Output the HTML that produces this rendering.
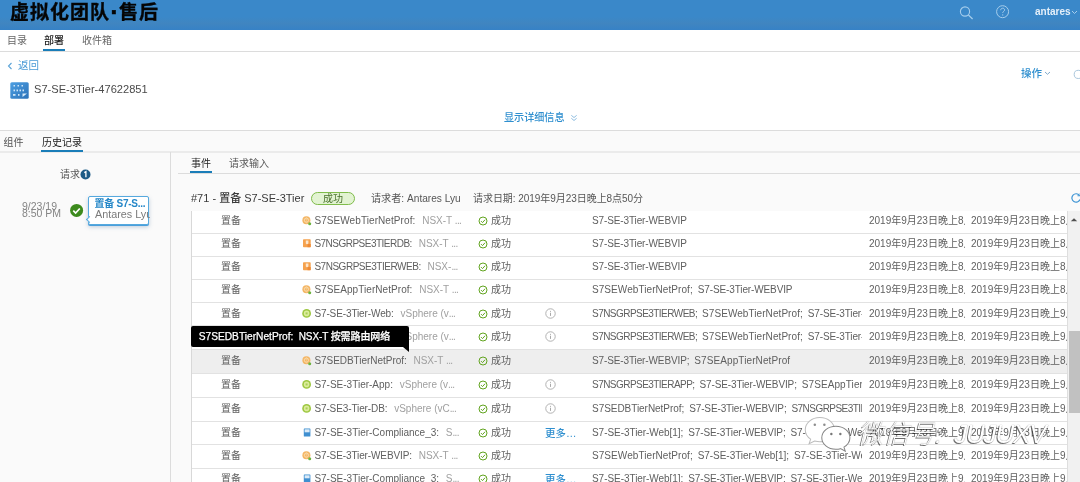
<!DOCTYPE html>
<html lang="zh-CN">
<head>
<meta charset="utf-8">
<title>虚拟化团队·售后</title>
<style>
*{box-sizing:border-box;margin:0;padding:0}
html,body{width:1080px;height:482px;overflow:hidden;background:#fff}
body{position:relative;will-change:transform;font-family:"Liberation Sans","Noto Sans CJK SC",sans-serif;font-size:10px;color:#565656}
.abs{position:absolute;white-space:nowrap}
.hdr{left:0;top:0;width:1080px;height:30px;background:linear-gradient(#3a88c9 0,#3a88c9 55%,#4085c0 78%,#3682c6 100%)}
.title{left:10px;top:0;height:29px;line-height:26px;font-size:19px;letter-spacing:1px;font-weight:700;color:#050505;-webkit-text-stroke:.35px #050505}
.title b{display:inline-block;width:9px;text-align:center;font-weight:900;letter-spacing:0;font-size:26px;line-height:20px;vertical-align:-1.5px}
.blue{color:#2f8fcf}
.nav{top:34px;font-size:10px;line-height:14px;color:#666}
.line{background:#dcdcdc;height:1px}
.t{font-size:10px;line-height:14px}
.tbl{left:191px;top:211px;width:876px;height:271px;background:#fff;border-left:1px solid #d8d8d8}
.r{left:192px;width:875px;height:20px}
.r.hl{}
.r span{position:absolute;top:0;line-height:20px;font-size:10px;white-space:nowrap;color:#606060;overflow:hidden}
.r i{font-style:normal;color:#a0a0a0;margin-left:4px}
.c1{left:29px}
.c2{left:122.4px;width:152px}
.r u{text-decoration:none;letter-spacing:-.7px}
.r em{font-style:normal}
.c3{left:299px}
.c4{left:353px;color:#2f8fcf !important;font-size:10.5px !important;font-weight:500}
.c5{left:400px;width:270px;word-spacing:2.1px}
.c6{left:677px;width:96px}
.c7{left:779px;width:96px}
.ic{position:absolute;left:110px;top:4px;width:10px;height:11px}
.ok{position:absolute;left:286px;top:5px;width:10px;height:10px}
.inf{position:absolute;left:353px;top:4px;width:11px;height:11px}
.rl{left:192px;width:875px;height:1px;background:#e2e2e2}
</style>
</head>
<body>
<div class="abs hdr"></div>
<div class="abs title">虚拟化团队<b>·</b>售后</div>
<svg class="abs" style="left:957px;top:4px" width="20" height="20" viewBox="0 0 20 20"><circle cx="8" cy="7.5" r="4.6" fill="none" stroke="#a5cdec" stroke-width="1.1"/><path d="M11.4 11l4.200 4" stroke="#a5cdec" stroke-width="1.2" fill="none"/></svg>
<svg class="abs" style="left:994px;top:3px" width="18" height="18" viewBox="0 0 18 18"><circle cx="8.6" cy="8.7" r="6" fill="none" stroke="#a5cdec" stroke-width="1"/><path d="M6.7 7.2c0-1.300.9-2 2-2s1.900.7 1.900 1.800c0 1.300-1.900 1.400-1.900 2.900" fill="none" stroke="#a5cdec" stroke-width="1"/><circle cx="8.7" cy="11.9" r=".7" fill="#a5cdec"/></svg>
<div class="abs" style="left:1035px;top:4.8px;font-size:10px;font-weight:700;color:#e4eff9;line-height:14px">antares</div>
<svg class="abs" style="left:1071px;top:10px" width="7" height="5" viewBox="0 0 7 5"><path d="M1 1l2.500 2.500L6 1" fill="none" stroke="#a5cdec" stroke-width="1"/></svg>

<div class="abs nav" style="left:7px">目录</div>
<div class="abs nav" style="left:44px;color:#222;font-weight:500">部署</div>
<div class="abs nav" style="left:82px">收件箱</div>
<div class="abs line" style="left:0;top:51px;width:1080px"></div>
<div class="abs" style="left:43px;top:49px;width:22px;height:2.4px;background:#1a7db8"></div>

<svg class="abs" style="left:7px;top:62px" width="6" height="8" viewBox="0 0 6 8"><path d="M4.500 1L1.500 4l3 3" fill="none" stroke="#5aa3d8" stroke-width="1.1"/></svg>
<div class="abs t" style="left:18px;top:58px;font-size:10.5px;color:#4a9bd6">返回</div>
<svg class="abs" style="left:10px;top:82px" width="19" height="17" viewBox="0 0 19 17"><defs><linearGradient id="g1" x1="0" y1="0" x2="1" y2="1"><stop offset="0" stop-color="#4d9fe2"/><stop offset="1" stop-color="#2d72b8"/></linearGradient></defs><rect x=".3" y=".3" width="18.4" height="16.4" rx="1.5" fill="url(#g1)"/><g fill="#cfe5f7"><rect x="3.500" y="3" width="1.500" height="1.500"/><rect x="7.500" y="3" width="1.500" height="1.500"/><rect x="11.500" y="3" width="1.500" height="1.500"/><rect x="3.500" y="7.500" width="1.500" height="1.800"/><rect x="6.500" y="7.500" width="1.500" height="1.800"/><rect x="9.500" y="7.500" width="1.500" height="1.800"/><rect x="12.500" y="7.500" width="1.500" height="1.800"/><rect x="3" y="12" width="2.500" height="1.800"/><rect x="8" y="12" width="1.500" height="1.800"/></g><path d="M12.500 11.500h4.500l-4.500 3.500z" fill="#d6e9f8"/></svg>
<div class="abs" style="left:34px;top:82px;font-size:11.1px;line-height:14px;color:#4a4a4a">S7-SE-3Tier-47622851</div>
<div class="abs t blue" style="left:1021px;top:66px;font-size:10.5px;font-weight:500">操作</div>
<svg class="abs" style="left:1044px;top:71px" width="7" height="5" viewBox="0 0 7 5"><path d="M1 1l2.500 2.300L6 1" fill="none" stroke="#7fa9cb" stroke-width="1"/></svg>
<svg class="abs" style="left:1072px;top:68px" width="12" height="12" viewBox="0 0 12 12"><circle cx="6.300" cy="6.400" r="4.100" fill="none" stroke="#a9c6dc" stroke-width="1"/></svg>
<div class="abs t blue" style="left:504px;top:111px;font-size:10.1px;font-weight:500">显示详细信息</div>
<svg class="abs" style="left:570px;top:113.5px" width="8" height="8" viewBox="0 0 9 9"><path d="M1.500 1.500L4.500 4l3-2.500M1.500 4.800L4.500 7.300l3-2.500" fill="none" stroke="#7fb4dc" stroke-width="1"/></svg>

<div class="abs" style="left:0;top:130px;width:1080px;height:352px;background:#fafafa"></div>
<div class="abs line" style="left:0;top:130px;width:1080px"></div>
<div class="abs t" style="left:3.5px;top:135.5px">组件</div>
<div class="abs t" style="left:42px;top:135.5px;color:#222">历史记录</div>
<div class="abs line" style="left:0;top:151px;width:1080px;height:2px;background:#ebebeb"></div>
<div class="abs" style="left:41px;top:150px;width:42px;height:2px;background:#1a7db8"></div>
<div class="abs" style="left:170px;top:152px;width:1px;height:330px;background:#dcdcdc"></div>

<div class="abs t" style="left:60px;top:168px">请求</div>
<svg class="abs" style="left:80px;top:169px" width="11" height="11" viewBox="0 0 11 11"><circle cx="5.500" cy="5.500" r="5" fill="#1d5b86"/><path d="M4.300 3.600l1.600-.9v5.600" fill="none" stroke="#fff" stroke-width="1.300"/></svg>
<div class="abs" style="left:22px;top:202.500px;font-size:10.5px;line-height:7.3px;color:#858585;text-align:left">9/23/19<br>8:50 PM</div>
<svg class="abs" style="left:69px;top:203px" width="15" height="15" viewBox="0 0 15 15"><circle cx="7.600" cy="7.400" r="6.500" fill="#3c8a1d"/><path d="M4.300 7.700l2.300 2.300 4.200-4.500" fill="none" stroke="#fff" stroke-width="1.700"/></svg>
<div class="abs" style="left:88px;top:196px;width:61px;height:29px;background:#fff;border:1px solid #56a9de;border-radius:2px;box-shadow:0 1px 0 #4a9fdb,0 2px 4px rgba(80,120,160,.35)"></div>
<div class="abs" style="left:86.500px;top:216.500px;width:5px;height:5px;background:#fff;border-left:1px solid #56a9de;border-bottom:1px solid #56a9de;transform:rotate(45deg)"></div>
<div class="abs" style="left:94.500px;top:198px;font-size:10px;letter-spacing:-.25px;font-weight:700;line-height:12px;color:#2587c8">置备 S7-S...</div>
<div class="abs" style="left:95px;top:208px;width:54.5px;overflow:hidden;font-size:10.8px;line-height:13px;color:#7a7a7a">Antares Lyu</div>

<div class="abs t" style="left:191px;top:157px;color:#222">事件</div>
<div class="abs t" style="left:229px;top:157px">请求输入</div>
<div class="abs" style="left:190px;top:171px;width:22px;height:2px;background:#1a7db8"></div>
<div class="abs line" style="left:178px;top:172.5px;width:902px"></div>

<div class="abs" style="left:191px;top:190.500px;font-size:11px;line-height:15px;color:#3a3a3a">#71 - <span style="font-weight:500">置备</span> S7-SE-3Tier</div>
<div class="abs" style="left:311px;top:192px;width:44px;height:13px;border:1px solid #7fbc4a;border-radius:7px;background:#e2f3d2;font-size:10px;line-height:11.5px;text-align:center;color:#48702a">成功</div>
<div class="abs t" style="left:371px;top:191.500px;font-size:10.15px">请求者: Antares Lyu</div>
<div class="abs t" style="left:473px;top:191.500px;font-size:10px;letter-spacing:-.05px">请求日期: 2019年9月23日晚上8点50分</div>
<svg class="abs" style="left:1070px;top:192px" width="12" height="12" viewBox="0 0 12 12"><path d="M9.500 3.500A4.200 4.200 0 1 0 10 7.500" fill="none" stroke="#3f95d4" stroke-width="1.200"/><path d="M7.500 3.800h2.800V1" fill="none" stroke="#3f95d4" stroke-width="1.100"/></svg>

<div class="abs tbl"></div>
<div class="abs" style="left:192px;top:349px;width:875px;height:24px;background:#eeeeee"></div>
<div class="abs rl" style="top:233px"></div>
<div class="abs rl" style="top:256px"></div>
<div class="abs rl" style="top:279px"></div>
<div class="abs rl" style="top:302px"></div>
<div class="abs rl" style="top:325px"></div>
<div class="abs rl" style="top:349px"></div>
<div class="abs rl" style="top:373px"></div>
<div class="abs rl" style="top:397px"></div>
<div class="abs rl" style="top:421px"></div>
<div class="abs rl" style="top:444px"></div>
<div class="abs rl" style="top:468px"></div>
<div class="abs r" style="top:211px"><span class="c1">置备</span><svg class="ic" viewBox="0 0 10 11"><circle cx="4.4" cy="5.2" r="4" fill="#f4b563"/><circle cx="4.4" cy="5.2" r="2.1" fill="none" stroke="#fbe0b4" stroke-width=".9"/><path d="M1.500 4.200h5.800M4.400 1.800v6.800" stroke="#f7cf97" stroke-width=".6"/><circle cx="7.700" cy="8.700" r="1.500" fill="#6db33f"/></svg><span class="c2"><em style="letter-spacing:0.08px">S7SEWebTierNetProf:</em><i> NSX-T <u>...</u></i></span><svg class="ok" viewBox="0 0 10 10"><circle cx="5" cy="5" r="4" fill="none" stroke="#62a420" stroke-width="1"/><path d="M3 5.1l1.5 1.5L7.1 3.7" fill="none" stroke="#62a420" stroke-width="1"/></svg><span class="c3">成功</span><span class="c5"><em style="letter-spacing:-0.12px">S7-SE-3Tier-WEBVIP</em></span><span class="c6">2019年9月23日晚上8点50分</span><span class="c7">2019年9月23日晚上8点02分</span></div>
<div class="abs r" style="top:234px"><span class="c1">置备</span><svg class="ic" viewBox="0 0 10 11"><rect x="1" y="1.200" width="7.700" height="8" rx=".8" fill="#f5a24e"/><path d="M3.800 2.600h2.600v2.800l-1.300 1.200-1.300-1.200z" fill="#fde6cc"/><path d="M5.500 6h3.200v3.200H5.500z" fill="#ee8a35"/></svg><span class="c2"><em style="letter-spacing:-0.51px">S7NSGRPSE3TIERDB:</em><i> NSX-T <u>...</u></i></span><svg class="ok" viewBox="0 0 10 10"><circle cx="5" cy="5" r="4" fill="none" stroke="#62a420" stroke-width="1"/><path d="M3 5.1l1.5 1.5L7.1 3.7" fill="none" stroke="#62a420" stroke-width="1"/></svg><span class="c3">成功</span><span class="c5"><em style="letter-spacing:-0.12px">S7-SE-3Tier-WEBVIP</em></span><span class="c6">2019年9月23日晚上8点50分</span><span class="c7">2019年9月23日晚上8点02分</span></div>
<div class="abs r" style="top:257px"><span class="c1">置备</span><svg class="ic" viewBox="0 0 10 11"><rect x="1" y="1.200" width="7.700" height="8" rx=".8" fill="#f5a24e"/><path d="M3.800 2.600h2.600v2.800l-1.300 1.200-1.300-1.200z" fill="#fde6cc"/><path d="M5.500 6h3.200v3.200H5.500z" fill="#ee8a35"/></svg><span class="c2"><em style="letter-spacing:-0.475px">S7NSGRPSE3TIERWEB:</em><i> NSX-<u>...</u></i></span><svg class="ok" viewBox="0 0 10 10"><circle cx="5" cy="5" r="4" fill="none" stroke="#62a420" stroke-width="1"/><path d="M3 5.1l1.5 1.5L7.1 3.7" fill="none" stroke="#62a420" stroke-width="1"/></svg><span class="c3">成功</span><span class="c5"><em style="letter-spacing:-0.12px">S7-SE-3Tier-WEBVIP</em></span><span class="c6">2019年9月23日晚上8点50分</span><span class="c7">2019年9月23日晚上8点02分</span></div>
<div class="abs r" style="top:280px"><span class="c1">置备</span><svg class="ic" viewBox="0 0 10 11"><circle cx="4.4" cy="5.2" r="4" fill="#f4b563"/><circle cx="4.4" cy="5.2" r="2.1" fill="none" stroke="#fbe0b4" stroke-width=".9"/><path d="M1.500 4.200h5.800M4.400 1.800v6.800" stroke="#f7cf97" stroke-width=".6"/><circle cx="7.700" cy="8.700" r="1.500" fill="#6db33f"/></svg><span class="c2"><em style="letter-spacing:0.06px">S7SEAppTierNetProf:</em><i> NSX-T <u>...</u></i></span><svg class="ok" viewBox="0 0 10 10"><circle cx="5" cy="5" r="4" fill="none" stroke="#62a420" stroke-width="1"/><path d="M3 5.1l1.5 1.5L7.1 3.7" fill="none" stroke="#62a420" stroke-width="1"/></svg><span class="c3">成功</span><span class="c5"><em style="letter-spacing:0.07px">S7SEWebTierNetProf;</em> <em style="letter-spacing:-0.12px">S7-SE-3Tier-WEBVIP</em></span><span class="c6">2019年9月23日晚上8点50分</span><span class="c7">2019年9月23日晚上8点02分</span></div>
<div class="abs r" style="top:304px"><span class="c1">置备</span><svg class="ic" viewBox="0 0 10 11"><circle cx="4.600" cy="5.400" r="4.400" fill="#9dc741"/><circle cx="4.600" cy="5.400" r="2.800" fill="#dcec9c"/><rect x="3.600" y="4.400" width="2" height="2" fill="#a9cf55"/></svg><span class="c2"><em style="letter-spacing:-0.115px">S7-SE-3Tier-Web:</em><i> vSphere (v<u>...</u></i></span><svg class="ok" viewBox="0 0 10 10"><circle cx="5" cy="5" r="4" fill="none" stroke="#62a420" stroke-width="1"/><path d="M3 5.1l1.5 1.5L7.1 3.7" fill="none" stroke="#62a420" stroke-width="1"/></svg><span class="c3">成功</span><svg class="inf" viewBox="0 0 10 10"><circle cx="5" cy="5" r="4.3" fill="none" stroke="#a8a8a8" stroke-width=".8"/><path d="M5 4.3v2.9M5 2.6v.9" stroke="#a8a8a8" stroke-width=".9" fill="none"/></svg><span class="c5"><em style="letter-spacing:-0.54px">S7NSGRPSE3TIERWEB;</em> <em style="letter-spacing:0.07px">S7SEWebTierNetProf;</em> <em style="letter-spacing:-0.12px">S7-SE-3Tier-WEBVIP</em></span><span class="c6">2019年9月23日晚上8点50分</span><span class="c7">2019年9月23日晚上9点02分</span></div>
<div class="abs r" style="top:327px"><span class="c1">置备</span><svg class="ic" viewBox="0 0 10 11"><circle cx="4.600" cy="5.400" r="4.400" fill="#9dc741"/><circle cx="4.600" cy="5.400" r="2.800" fill="#dcec9c"/><rect x="3.600" y="4.400" width="2" height="2" fill="#a9cf55"/></svg><span class="c2"><em style="letter-spacing:-0.115px">S7-SE-3Tier-Web:</em><i> vSphere (v<u>...</u></i></span><svg class="ok" viewBox="0 0 10 10"><circle cx="5" cy="5" r="4" fill="none" stroke="#62a420" stroke-width="1"/><path d="M3 5.1l1.5 1.5L7.1 3.7" fill="none" stroke="#62a420" stroke-width="1"/></svg><span class="c3">成功</span><svg class="inf" viewBox="0 0 10 10"><circle cx="5" cy="5" r="4.3" fill="none" stroke="#a8a8a8" stroke-width=".8"/><path d="M5 4.3v2.9M5 2.6v.9" stroke="#a8a8a8" stroke-width=".9" fill="none"/></svg><span class="c5"><em style="letter-spacing:-0.54px">S7NSGRPSE3TIERWEB;</em> <em style="letter-spacing:0.07px">S7SEWebTierNetProf;</em> <em style="letter-spacing:-0.12px">S7-SE-3Tier-WEBVIP</em></span><span class="c6">2019年9月23日晚上8点50分</span><span class="c7">2019年9月23日晚上9点02分</span></div>
<div class="abs r hl" style="top:351px"><span class="c1">置备</span><svg class="ic" viewBox="0 0 10 11"><circle cx="4.4" cy="5.2" r="4" fill="#f4b563"/><circle cx="4.4" cy="5.2" r="2.1" fill="none" stroke="#fbe0b4" stroke-width=".9"/><path d="M1.500 4.200h5.800M4.400 1.800v6.800" stroke="#f7cf97" stroke-width=".6"/><circle cx="7.700" cy="8.700" r="1.500" fill="#6db33f"/></svg><span class="c2"><em style="letter-spacing:-0.04px">S7SEDBTierNetProf:</em><i> NSX-T <u>...</u></i></span><svg class="ok" viewBox="0 0 10 10"><circle cx="5" cy="5" r="4" fill="none" stroke="#62a420" stroke-width="1"/><path d="M3 5.1l1.5 1.5L7.1 3.7" fill="none" stroke="#62a420" stroke-width="1"/></svg><span class="c3">成功</span><span class="c5"><em style="letter-spacing:-0.12px">S7-SE-3Tier-WEBVIP;</em> <em style="letter-spacing:0.1px">S7SEAppTierNetProf</em></span><span class="c6">2019年9月23日晚上8点50分</span><span class="c7">2019年9月23日晚上8点02分</span></div>
<div class="abs r" style="top:375px"><span class="c1">置备</span><svg class="ic" viewBox="0 0 10 11"><circle cx="4.600" cy="5.400" r="4.400" fill="#9dc741"/><circle cx="4.600" cy="5.400" r="2.800" fill="#dcec9c"/><rect x="3.600" y="4.400" width="2" height="2" fill="#a9cf55"/></svg><span class="c2"><em style="letter-spacing:0px">S7-SE-3Tier-App:</em><i> vSphere (v<u>...</u></i></span><svg class="ok" viewBox="0 0 10 10"><circle cx="5" cy="5" r="4" fill="none" stroke="#62a420" stroke-width="1"/><path d="M3 5.1l1.5 1.5L7.1 3.7" fill="none" stroke="#62a420" stroke-width="1"/></svg><span class="c3">成功</span><svg class="inf" viewBox="0 0 10 10"><circle cx="5" cy="5" r="4.3" fill="none" stroke="#a8a8a8" stroke-width=".8"/><path d="M5 4.3v2.9M5 2.6v.9" stroke="#a8a8a8" stroke-width=".9" fill="none"/></svg><span class="c5"><em style="letter-spacing:-0.54px">S7NSGRPSE3TIERAPP;</em> <em style="letter-spacing:-0.12px">S7-SE-3Tier-WEBVIP;</em> <em style="letter-spacing:0.1px">S7SEAppTierNetProf</em></span><span class="c6">2019年9月23日晚上8点50分</span><span class="c7">2019年9月23日晚上9点02分</span></div>
<div class="abs r" style="top:399px"><span class="c1">置备</span><svg class="ic" viewBox="0 0 10 11"><circle cx="4.600" cy="5.400" r="4.400" fill="#9dc741"/><circle cx="4.600" cy="5.400" r="2.800" fill="#dcec9c"/><rect x="3.600" y="4.400" width="2" height="2" fill="#a9cf55"/></svg><span class="c2"><em style="letter-spacing:-0.11px">S7-SE3-Tier-DB:</em><i> vSphere (vC<u>...</u></i></span><svg class="ok" viewBox="0 0 10 10"><circle cx="5" cy="5" r="4" fill="none" stroke="#62a420" stroke-width="1"/><path d="M3 5.1l1.5 1.5L7.1 3.7" fill="none" stroke="#62a420" stroke-width="1"/></svg><span class="c3">成功</span><svg class="inf" viewBox="0 0 10 10"><circle cx="5" cy="5" r="4.3" fill="none" stroke="#a8a8a8" stroke-width=".8"/><path d="M5 4.3v2.9M5 2.6v.9" stroke="#a8a8a8" stroke-width=".9" fill="none"/></svg><span class="c5"><em style="letter-spacing:-0.04px">S7SEDBTierNetProf;</em> <em style="letter-spacing:-0.12px">S7-SE-3Tier-WEBVIP;</em> <em style="letter-spacing:-0.54px">S7NSGRPSE3TIERDB</em></span><span class="c6">2019年9月23日晚上8点50分</span><span class="c7">2019年9月23日晚上9点02分</span></div>
<div class="abs r" style="top:423px"><span class="c1">置备</span><svg class="ic" viewBox="0 0 10 11"><rect x="1.800" y="1.500" width="6.600" height="8" rx=".6" fill="#3f8fd0"/><rect x="2.600" y="2.300" width="5" height="3" fill="#dcebf8"/></svg><span class="c2"><em style="letter-spacing:0px">S7-SE-3Tier-Compliance_3:</em><i> S<u>...</u></i></span><svg class="ok" viewBox="0 0 10 10"><circle cx="5" cy="5" r="4" fill="none" stroke="#62a420" stroke-width="1"/><path d="M3 5.1l1.5 1.5L7.1 3.7" fill="none" stroke="#62a420" stroke-width="1"/></svg><span class="c3">成功</span><span class="c4">更多…</span><span class="c5"><em style="letter-spacing:-0.05px">S7-SE-3Tier-Web[1];</em> <em style="letter-spacing:-0.12px">S7-SE-3Tier-WEBVIP;</em> <em style="letter-spacing:-0.05px">S7-SE-3Tier-Web[2]</em></span><span class="c6">2019年9月23日晚上9点50分</span><span class="c7">2019年9月23日晚上9点02分</span></div>
<div class="abs r" style="top:446px"><span class="c1">置备</span><svg class="ic" viewBox="0 0 10 11"><circle cx="4.4" cy="5.2" r="4" fill="#f4b563"/><circle cx="4.4" cy="5.2" r="2.1" fill="none" stroke="#fbe0b4" stroke-width=".9"/><path d="M1.500 4.200h5.800M4.400 1.800v6.800" stroke="#f7cf97" stroke-width=".6"/><circle cx="7.700" cy="8.700" r="1.500" fill="#6db33f"/></svg><span class="c2"><em style="letter-spacing:-0.11px">S7-SE-3Tier-WEBVIP:</em><i> NSX-T <u>...</u></i></span><svg class="ok" viewBox="0 0 10 10"><circle cx="5" cy="5" r="4" fill="none" stroke="#62a420" stroke-width="1"/><path d="M3 5.1l1.5 1.5L7.1 3.7" fill="none" stroke="#62a420" stroke-width="1"/></svg><span class="c3">成功</span><span class="c5"><em style="letter-spacing:0.07px">S7SEWebTierNetProf;</em> <em style="letter-spacing:-0.05px">S7-SE-3Tier-Web[1];</em> <em style="letter-spacing:-0.05px">S7-SE-3Tier-Web[2]</em></span><span class="c6">2019年9月23日晚上9点50分</span><span class="c7">2019年9月23日晚上9点02分</span></div>
<div class="abs r" style="top:469px"><span class="c1">置备</span><svg class="ic" viewBox="0 0 10 11"><rect x="1.800" y="1.500" width="6.600" height="8" rx=".6" fill="#3f8fd0"/><rect x="2.600" y="2.300" width="5" height="3" fill="#dcebf8"/></svg><span class="c2"><em style="letter-spacing:0px">S7-SE-3Tier-Compliance_3:</em><i> S<u>...</u></i></span><svg class="ok" viewBox="0 0 10 10"><circle cx="5" cy="5" r="4" fill="none" stroke="#62a420" stroke-width="1"/><path d="M3 5.1l1.5 1.5L7.1 3.7" fill="none" stroke="#62a420" stroke-width="1"/></svg><span class="c3">成功</span><span class="c4">更多…</span><span class="c5"><em style="letter-spacing:-0.05px">S7-SE-3Tier-Web[1];</em> <em style="letter-spacing:-0.12px">S7-SE-3Tier-WEBVIP;</em> <em style="letter-spacing:-0.05px">S7-SE-3Tier-Web[2]</em></span><span class="c6">2019年9月23日晚上9点50分</span><span class="c7">2019年9月23日晚上9点02分</span></div>
<div class="abs" style="left:1067px;top:211px;width:13px;height:271px;background:#f1f1f1;border-left:1px solid #dedede"></div>
<div class="abs" style="left:1069px;top:331px;width:11px;height:82px;background:#c1c1c1"></div>
<svg class="abs" style="left:1070px;top:217px" width="8" height="5" viewBox="0 0 8 5"><path d="M.8 4.200L4 1.200l3.200 3z" fill="#505050"/></svg>

<div class="abs" style="left:191px;top:326px;width:218px;height:21px;background:#000;border-radius:2px 2px 0 2px"></div>
<div class="abs" style="left:403px;top:347px;width:0;height:0;border-left:6px solid transparent;border-top:5px solid #000"></div>
<div class="abs" style="left:198.7px;top:329.5px;font-size:10.2px;line-height:14px;color:#fff;-webkit-text-stroke:.25px #fff">S7SEDBTierNetProf:&nbsp; <b style="font-weight:500;font-size:10px;letter-spacing:-.1px;margin-left:-.4px">NSX-T 按需路由网络</b></div>

<svg class="abs" style="left:802.5px;top:412.5px" width="54" height="45" viewBox="0 0 48 40"><path d="M15 4c-7.200 0-13 4.800-13 10.800 0 3.400 1.900 6.400 4.800 8.400l-1.400 4.200 4.900-2.500c1.500.4 3 .7 4.700.7 7.200 0 13-4.800 13-10.800S22.200 4 15 4z" fill="#fff" stroke="#bdbdbd" stroke-width=".9"/><g fill="#8d8d8d"><circle cx="10.500" cy="10.500" r="1.100"/><circle cx="19" cy="10.500" r="1.100"/></g><g transform="translate(-1.800 -1.300)"><path d="M31 13c-7 0-12.500 4.600-12.500 10.300S24 33.600 31 33.600c1.400 0 2.800-.2 4.100-.6l4.300 2.300-1.200-3.700c3.200-1.900 5.300-4.900 5.300-8.300C43.500 17.600 38 13 31 13z" fill="#fff" stroke="#858585" stroke-width=".9"/><g fill="#777"><circle cx="27" cy="20" r="1.100"/><circle cx="35" cy="20" r="1.100"/></g></g></svg>
<div class="abs" style="left:857px;top:415.5px;font-size:26px;line-height:36px;font-weight:300;color:#fff;font-style:italic;text-shadow:-1px 1px 0 rgba(0,0,0,.55),0 0 1px rgba(0,0,0,.5)">微信号:<span style="letter-spacing:-1.2px;margin-left:12px">JUJUXV</span></div>
</body>
</html>
